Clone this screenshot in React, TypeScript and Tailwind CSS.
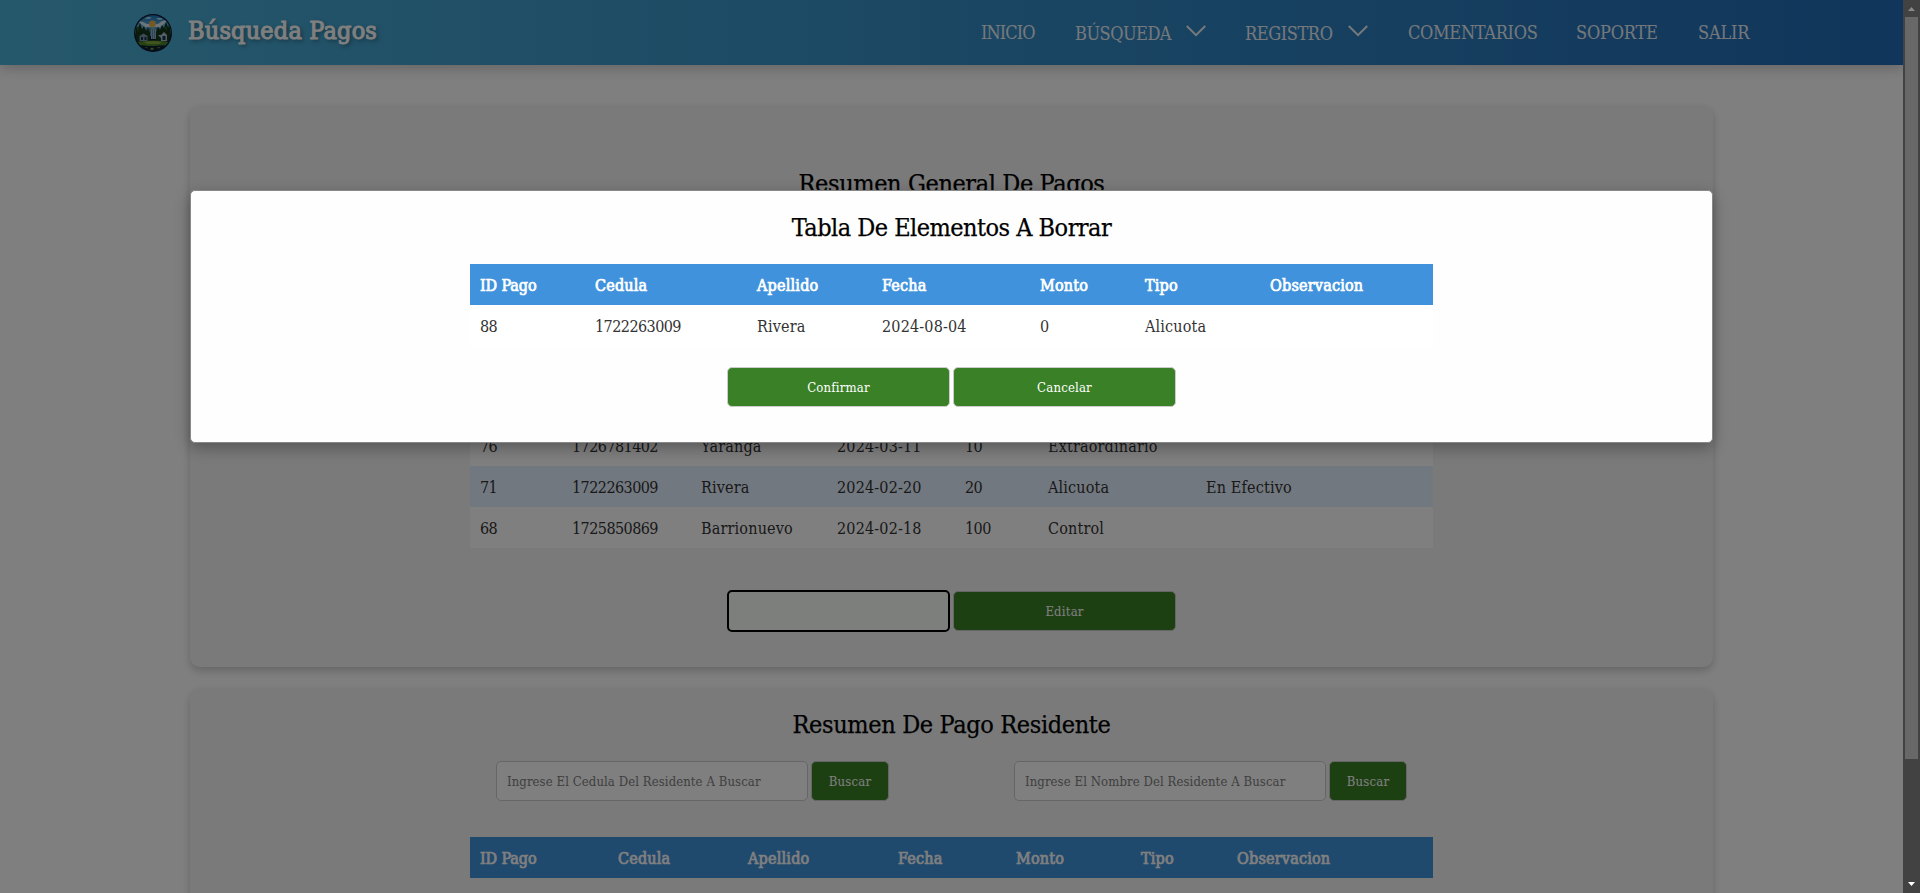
import type { ReactNode } from "react";

type Column = { label: string; width: string };
type Payment = string[];

const deleteColumns: Column[] = [
  { label: "ID Pago", width: "w-[115px]" },
  { label: "Cedula", width: "w-[162px]" },
  { label: "Apellido", width: "w-[125px]" },
  { label: "Fecha", width: "w-[158px]" },
  { label: "Monto", width: "w-[105px]" },
  { label: "Tipo", width: "w-[125px]" },
  { label: "Observacion", width: "w-[173px]" },
];

const generalColumns: Column[] = [
  { label: "ID Pago", width: "w-[92px]" },
  { label: "Cedula", width: "w-[129px]" },
  { label: "Apellido", width: "w-[136px]" },
  { label: "Fecha", width: "w-[128px]" },
  { label: "Monto", width: "w-[83px]" },
  { label: "Tipo", width: "w-[158px]" },
  { label: "Observacion", width: "w-[237px]" },
];

const residentColumns: Column[] = [
  { label: "ID Pago", width: "w-[138px]" },
  { label: "Cedula", width: "w-[130px]" },
  { label: "Apellido", width: "w-[150px]" },
  { label: "Fecha", width: "w-[118px]" },
  { label: "Monto", width: "w-[125px]" },
  { label: "Tipo", width: "w-[96px]" },
  { label: "Observacion", width: "w-[206px]" },
];

const payments: Payment[] = [
  ["76", "1726781402", "Yaranga", "2024-03-11", "10", "Extraordinario", ""],
  ["71", "1722263009", "Rivera", "2024-02-20", "20", "Alicuota", "En Efectivo"],
  ["68", "1725850869", "Barrionuevo", "2024-02-18", "100", "Control", ""],
];

const numeric = /^\d+$/;

function PaymentTable({ columns, rows }: { columns: Column[]; rows: Payment[] }) {
  return (
    <table className="w-[963px] table-fixed border-collapse text-left text-[16px] leading-[21px]">
      <thead>
        <tr className="h-[41px] bg-[#4092dd] text-white">
          {columns.map((c) => (
            <th
              key={c.label}
              className={`${c.width} px-2.5 pt-0.5 pb-0 font-normal whitespace-nowrap [-webkit-text-stroke:0.7px_currentColor] ${c.label === "ID Pago" ? "tracking-[-0.1px]" : "tracking-[0.2px]"}`}
            >
              {c.label}
            </th>
          ))}
        </tr>
      </thead>
      <tbody>
        {rows.map((row) => (
          <tr key={row[0]} className="h-[41px] bg-white text-[#333] even:bg-[#e4f0fe]">
            {row.map((cell, i) => (
              <td
                key={i}
                className={`px-2.5 pt-0.5 pb-0 whitespace-nowrap ${numeric.test(cell) ? "tracking-[-0.56px]" : "tracking-[0.17px]"}`}
              >
                {cell}
              </td>
            ))}
          </tr>
        ))}
      </tbody>
    </table>
  );
}

function Button({ children, className }: { children: ReactNode; className: string }) {
  return (
    <button
      type="button"
      className={`h-10 rounded-[5px] border border-[#ccc] bg-[#3a8026] pt-px text-[13px] tracking-[0.2px] text-white ${className}`}
    >
      {children}
    </button>
  );
}

function Title({ children, className }: { children: ReactNode; className: string }) {
  return (
    <h2 className={`text-center text-[25px] leading-[33px] text-black [-webkit-text-stroke:0.25px_black] ${className}`}>
      {children}
    </h2>
  );
}

function Chevron() {
  return (
    <svg width="20" height="12" viewBox="0 0 20 12" fill="none" stroke="currentColor" strokeWidth="2" className="mb-1">
      <path d="M0.8 1 10 10.2 19.2 1" />
    </svg>
  );
}

function Logo() {
  return (
    <svg width="38" height="38" viewBox="0 0 38 38">
      <defs>
        <clipPath id="seal">
          <circle cx="19" cy="19" r="17.700" />
        </clipPath>
        <linearGradient id="sky" x1="0" y1="0" x2="0" y2="1">
          <stop offset="0" stopColor="#1273bb" />
          <stop offset="1" stopColor="#8fd0ec" />
        </linearGradient>
      </defs>
      <circle cx="19" cy="19" r="19" fill="#0a1930" />
      <g clipPath="url(#seal)">
        <rect width="38" height="20" fill="url(#sky)" />
        <path d="M4 7l5 1 4 2h11l4-3 6-1-4 4-4 3H11L7 10z" fill="#d8ecf4" />
        <path d="M10 4l5-1 3 1-4 1zM22 4l5 0 2 1-4 1z" fill="#b9def0" />
        <circle cx="18.500" cy="10" r="3.400" fill="#e8b04a" />
        <path d="M9 17l5-4 5 2 5-2 5 4v5H9z" fill="#4d7f9a" />
        <path d="M0 13l2-3 2 4 2-5 2 6 2-3 2 5 2-3 2 5v8H0zM38 13l-2-4-2 4-2-5-2 6-2-3-2 5-2-3-2 5v9h14z" fill="#15351a" />
        <path d="M3 15l1-2 1 5zM31 14l1-2 1 5z" fill="#3f6b25" />
        <path d="M17 15h5v10h-5z" fill="#8fb5cc" />
        <path d="M18.500 15v10M20.500 15v10" stroke="#3f6c8a" strokeWidth="0.600" />
        <path d="M5.500 22l4-2.500 4 2.500v5h-8z" fill="#7897ae" />
        <path d="M24 21l3 3 0 3h6v-6l-3-3-3 3z" fill="#a9bfd0" />
        <path d="M7 23h2v3H7zM10.500 23h2v3h-2zM28.500 22h3v4h-3z" fill="#152f4b" />
        <path d="M1 28q18-3 36 0v4H1z" fill="#49842d" />
        <path d="M10 28q9-2 18 0l-3 2H13z" fill="#86a93f" />
        <path d="M2 32q8-2 15 1 9-3 19-1l-4 6H7z" fill="#0d2030" />
        <path d="M16 35l2-1.500 2 1.500-2 1zM23 33.500l3-0.500-1 1.500zM11 33l2 0 0 1z" fill="#7ca040" />
      </g>
    </svg>
  );
}

function SearchForm({ placeholder }: { placeholder: string }) {
  return (
    <div className="flex items-center gap-[3px]">
      <div className="flex h-10 w-[312px] items-center rounded-[5px] border border-[#ccc] bg-white px-2.5 pt-px text-[13px] tracking-[0.09px] whitespace-nowrap text-[#808080]">
        {placeholder}
      </div>
      <Button className="w-[78px]">Buscar</Button>
    </div>
  );
}

function Header() {
  return (
    <header className="relative flex h-[65px] shrink-0 items-center bg-linear-to-r from-[#4db1d6] to-[#226bb6] pl-[134px] text-white shadow-[0_4px_12px_rgba(0,0,0,0.2)]">
      <Logo />
      <h1 className="ml-4 w-[793px] pb-[3px] text-[25px] tracking-[0.18px] whitespace-nowrap [-webkit-text-stroke:1px_currentColor] [text-shadow:2px_2px_4px_rgba(0,0,0,0.5)]">
        Búsqueda Pagos
      </h1>
      <nav className="flex items-center text-[18px] tracking-[-0.4px] whitespace-nowrap text-white/90">
        <span className="w-[94px] tracking-[-0.9px]">INICIO</span>
        <span className="flex w-[170px] items-center gap-[15px] tracking-[-0.5px]">
          <span className="w-24 pt-0.5">BÚSQUEDA</span>
          <Chevron />
        </span>
        <span className="flex w-[163px] items-center gap-[15px]">
          <span className="w-[88px] pt-0.5">REGISTRO</span>
          <Chevron />
        </span>
        <span className="w-[168px] tracking-[-0.3px]">COMENTARIOS</span>
        <span className="w-[122px] tracking-[-0.2px]">SOPORTE</span>
        <span className="tracking-[-0.2px]">SALIR</span>
      </nav>
    </header>
  );
}

function Scrollbar() {
  return (
    <div className="flex h-full w-[17px] shrink-0 flex-col items-center bg-[#424242]">
      <div className="flex h-[17px] items-center">
        <svg width="7" height="4" viewBox="0 0 7 4" fill="#8a8a8a">
          <path d="M3.500 0 7 4H0z" />
        </svg>
      </div>
      <div className="h-[742px] w-[13px] bg-[#686868]" />
      <svg width="7" height="4" viewBox="0 0 7 4" fill="#fff" className="mt-auto mb-[7px]">
        <path d="M0 0H7L3.500 4z" />
      </svg>
    </div>
  );
}

export default function App() {
  return (
    <div className="flex h-[893px] w-[1920px] overflow-hidden bg-white font-['DejaVu_Serif_Condensed','DejaVu_Serif',serif] [font-stretch:condensed]">
      <div className="relative flex h-full w-[1903px] flex-col overflow-hidden">
        <Header />
        <main className="flex flex-col items-center gap-[21px] pt-10">
          <section className="flex h-[562px] w-[1523px] flex-col items-center rounded-[10px] bg-[#f4f4f4] pt-[62px] shadow-[0_4px_8px_rgba(0,0,0,0.2)]">
            <Title className="tracking-[-0.4px]">Resumen General De Pagos</Title>
            <div className="mt-[184px]">
              <PaymentTable columns={generalColumns} rows={payments} />
            </div>
            <div className="mt-[42px] flex items-center gap-[3px]">
              <button
                type="button"
                className="h-[42px] w-[223px] rounded-[5px] border-2 border-black bg-[#fbfff9]"
                aria-label="Borrar"
              />
              <Button className="w-[223px]">Editar</Button>
            </div>
          </section>
          <section className="flex h-[400px] w-[1523px] shrink-0 flex-col items-center rounded-[10px] bg-[#f4f4f4] pt-[20px] shadow-[0_4px_8px_rgba(0,0,0,0.2)]">
            <Title className="tracking-[-0.36px]">Resumen De Pago Residente</Title>
            <div className="mt-5 mb-9 flex gap-[125px]">
              <SearchForm placeholder="Ingrese El Cedula Del Residente A Buscar" />
              <SearchForm placeholder="Ingrese El Nombre Del Residente A Buscar" />
            </div>
            <PaymentTable columns={residentColumns} rows={[]} />
          </section>
        </main>

        <div className="absolute inset-0 flex justify-center bg-black/50 pt-[190px]">
          <div
            role="dialog"
            className="flex h-[253px] w-[1523px] flex-col items-center rounded-[5px] border border-[#888] bg-[#fefefe] pt-[20px] shadow-[0_5px_15px_rgba(0,0,0,0.3)]"
          >
            <Title className="tracking-[-0.52px]">Tabla De Elementos A Borrar</Title>
            <div className="mt-5">
              <PaymentTable columns={deleteColumns} rows={[["88", "1722263009", "Rivera", "2024-08-04", "0", "Alicuota", ""]]} />
            </div>
            <div className="mt-[21px] flex gap-[3px]">
              <Button className="w-[223px]">Confirmar</Button>
              <Button className="w-[223px]">Cancelar</Button>
            </div>
          </div>
        </div>
      </div>
      <Scrollbar />
    </div>
  );
}
